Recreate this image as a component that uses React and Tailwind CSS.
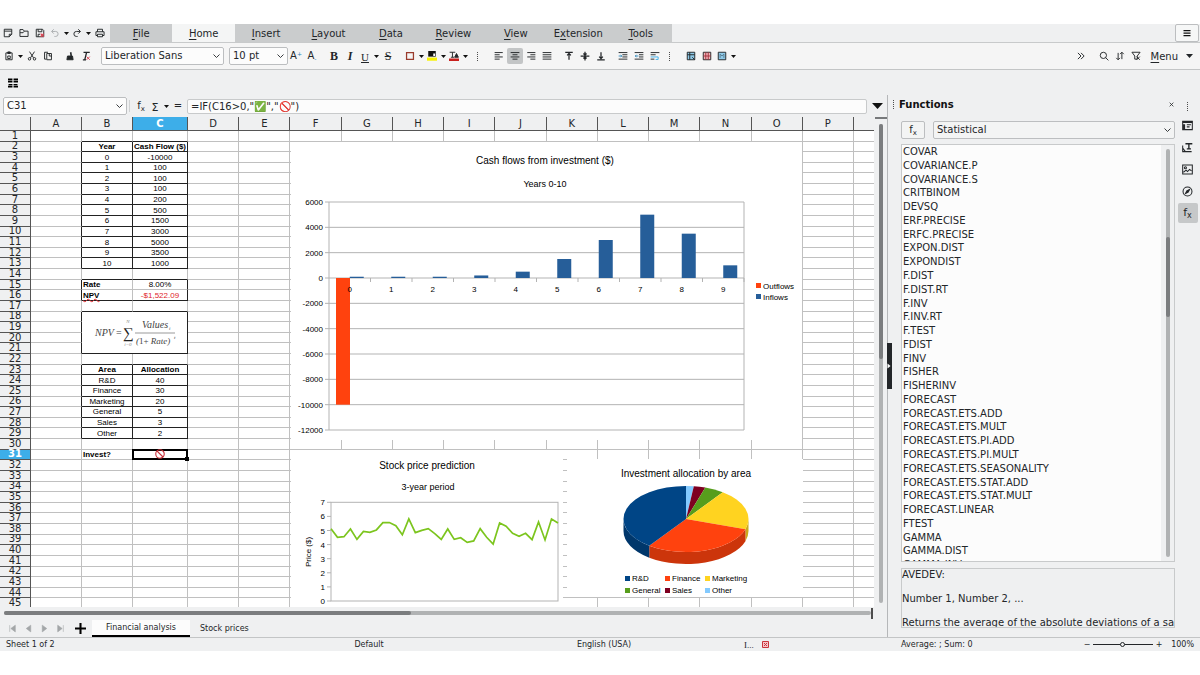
import { useState } from 'react'
import clsx from 'clsx'

const MENU = [
  ['', 'F', 'ile'],
  ['', 'H', 'ome'],
  ['', 'I', 'nsert'],
  ['', 'L', 'ayout'],
  ['', 'D', 'ata'],
  ['', 'R', 'eview'],
  ['', 'V', 'iew'],
  ['E', 'x', 'tension'],
  ['', 'T', 'ools'],
]

const COLUMNS = 'ABCDEFGHIJKLMNOP'.split('')
const ROW_COUNT = 45

const CELLS = {
  B2: 'Year', C2: 'Cash Flow ($)',
  B3: '0', C3: '-10000',
  B4: '1', C4: '100',
  B5: '2', C5: '100',
  B6: '3', C6: '100',
  B7: '4', C7: '200',
  B8: '5', C8: '500',
  B9: '6', C9: '1500',
  B10: '7', C10: '3000',
  B11: '8', C11: '5000',
  B12: '9', C12: '3500',
  B13: '10', C13: '1000',
  B15: 'Rate', C15: '8.00%',
  B16: 'NPV', C16: '-$1,522.09',
  B23: 'Area', C23: 'Allocation',
  B24: 'R&D', C24: '40',
  B25: 'Finance', C25: '30',
  B26: 'Marketing', C26: '20',
  B27: 'General', C27: '5',
  B28: 'Sales', C28: '3',
  B29: 'Other', C29: '2',
  B31: 'Invest?',
}
const BOLD = ['B2', 'C2', 'B15', 'B16', 'B23', 'C23', 'B31']
const LEFT = ['B15', 'B16', 'B31']

const FUNCTIONS = [
  'COVAR', 'COVARIANCE.P', 'COVARIANCE.S', 'CRITBINOM', 'DEVSQ', 'ERF.PRECISE', 'ERFC.PRECISE',
  'EXPON.DIST', 'EXPONDIST', 'F.DIST', 'F.DIST.RT', 'F.INV', 'F.INV.RT', 'F.TEST', 'FDIST', 'FINV',
  'FISHER', 'FISHERINV', 'FORECAST', 'FORECAST.ETS.ADD', 'FORECAST.ETS.MULT', 'FORECAST.ETS.PI.ADD',
  'FORECAST.ETS.PI.MULT', 'FORECAST.ETS.SEASONALITY', 'FORECAST.ETS.STAT.ADD',
  'FORECAST.ETS.STAT.MULT', 'FORECAST.LINEAR', 'FTEST', 'GAMMA', 'GAMMA.DIST', 'GAMMA.INV',
]

const INFLOWS = [100, 100, 100, 200, 500, 1500, 3000, 5000, 3500, 1000]

const PRICES = [
  5.13, 4.52, 4.56, 5.11, 4.37, 4.94, 4.87, 5.04, 5.56, 5.56, 5.34, 4.7, 5.82, 4.85, 5.01, 5.13, 4.78, 4.37,
  5.11, 4.37, 4.49, 4.16, 4.26, 5.13, 4.52, 4.04, 5.53, 5.3, 4.8, 4.59, 4.8, 4.35, 5.6, 4.33, 5.82, 5.53,
]

// clockwise from twelve o'clock
const SLICES = [
  { name: 'Other', value: 2, color: '#83caff' },
  { name: 'Sales', value: 3, color: '#7e0021' },
  { name: 'General', value: 5, color: '#579d1c' },
  { name: 'Marketing', value: 20, color: '#ffd320' },
  { name: 'Finance', value: 30, color: '#ff420e' },
  { name: 'R&D', value: 40, color: '#004586' },
]

/* ---------- icons ---------- */

function Svg({ children, className = 'size-[10px]' }) {
  return (
    <svg className={className} viewBox="0 0 16 16" fill="none" stroke="currentColor" strokeWidth="1.5">
      {children}
    </svg>
  )
}

function Caret() {
  return (
    <svg className="w-[5px] h-[3px]" viewBox="0 0 10 6" fill="currentColor"><path d="M0 0h10L5 6z" /></svg>
  )
}

const ICONS = {
  new: <><path d="M14 10V2H2v12h8z" /><path d="M2 5h12M10 14v-4h4" /></>,
  open: <path d="M1.500 13.500V2.500h5l2 2.500h6v8.500zM1.500 7.500h5l2-2.500" />,
  save: <><path d="M2 2h10l2 2v10H2zM5 2v4h6V2M5 14v-4h3" /><path d="M9 9l5 5M14 9l-5 5" stroke="#da4453" strokeWidth="2" /></>,
  undo: <path d="M6 2L2.500 5.500 6 9M3 5.500h6a4 4 0 0 1 0 8H7" />,
  redo: <path d="M10 2l3.500 3.500L10 9M13 5.500H7a4 4 0 0 0 0 8h2" />,
  print: <><path d="M4 6V2h8v4M4 12H1.500V6h13v6H12" /><path d="M4 10h8v4H4z" /></>,
  paste: <><path d="M3 3h10v11H3z" /><path d="M6 1.500h4V4H6z" fill="currentColor" /><path d="M6 8h4v4H6z" /></>,
  cut: <><path d="M4 1l6.500 10M12 1L5.500 11" /><circle cx="4" cy="12.500" r="2" /><circle cx="12" cy="12.500" r="2" /></>,
  copy: <path d="M5 13H2.500V2H8M6 4h7.500v10H6zM10 4v4h3.500" />,
  brush: <><path d="M9 2l1 6" strokeWidth="2.500" /><path d="M4 8h8l1 6H3z" fill="currentColor" /></>,
  clear: <><path d="M4 2h10M9 2L6 14M3 14h5" strokeWidth="2" /><path d="M9 9l5 5M14 9l-5 5" stroke="#da4453" /></>,
  border: <path d="M2.500 2.500h11v11h-11z" stroke="#9a3b2c" strokeWidth="2" />,
  fill: <><path d="M2 0h12v9H2z" fill="#111" stroke="none" /><path d="M10 4h3v4h-3z" fill="#fff" stroke="none" /><path d="M0 13h16" stroke="#f8f200" strokeWidth="5" /></>,
  color: <><path d="M1 2h9M5.500 2v8M3 10h5" /><path d="M9 10l3-6 3 6z" fill="currentColor" /><path d="M0 14h16" stroke="#c9211e" strokeWidth="4" /></>,
  left: <path d="M1 2.500h13M1 6h8M1 9.500h13M1 13h8" />,
  center: <path d="M1 2.500h14M4 6h8M1 9.500h14M4 13h8" />,
  right: <path d="M2 2.500h13M7 6h8M2 9.500h13M7 13h8" />,
  justify: <path d="M1 2.500h14M1 6h14M1 9.500h14M1 13h14" />,
  top: <path d="M2 2h12M8 14V4M5 7l3-3 3 3" strokeWidth="2" />,
  middle: <path d="M1 8h14M8 1v14M5.500 4L8 6.500 10.500 4M5.500 12L8 9.500l2.500 2.500" strokeWidth="2" />,
  bottom: <path d="M2 14h12M8 2v10M5 9l3 3 3-3" strokeWidth="2" />,
  indent: <><path d="M1 2.500h14M7 6h8M7 9.500h8M1 13h14" /><path d="M1 8h5M4 6l2 2-2 2" stroke="#3b8dbd" /></>,
  outdent: <><path d="M1 2.500h14M8 6h7M8 9.500h7M1 13h14" /><path d="M7 8H2M4 6L2 8l2 2" stroke="#3b8dbd" /></>,
  wrap: <><path d="M1 2.500h14M1 6h8M1 13h6" /><path d="M1 9.500h12v4h-4" stroke="#3daee9" /></>,
  merge: <><path d="M2 2h12v12H2z" fill="#8ec9e8" /><path d="M2 6h12M6 2v12M10 10l4 4" /></>,
  split: <><path d="M2 2h12v12H2z" fill="#f0b5ba" /><path d="M2 8h12M6 2v12M10 2v12" stroke="#a8323e" /></>,
  cells: <><path d="M2 2h12v12H2z" fill="#8ec9e8" /><path d="M5 11V5l3 3 3-3v6" stroke="#5a7d90" /></>,
  more: <path d="M3 3l5 5-5 5M8 3l5 5-5 5" />,
  search: <><circle cx="7" cy="7" r="5" /><path d="M10.500 10.500L15 15" /></>,
  sort: <path d="M5 3v11M2 11l3 3 3-3M11 13V2M8 5l3-3 3 3" />,
  filter: <path d="M1.500 2h13L10 8v5H6V8zM9 9l5 5M14 9l-5 5" />,
  menu: <path d="M1 3h14M1 8h14M1 13h14" strokeWidth="2.500" />,
  props: <><path d="M1 2h14v12H1z" /><path d="M1 3h14M3 6v7" strokeWidth="3" /><path d="M7 7h6M7 10h4" /></>,
  styles: <><path d="M5 2.500h10M10 2v8M7 10h6" strokeWidth="2" /><path d="M1 5v9h13M1 9l4 5" /></>,
  gallery: <><path d="M1 1.500h14v13H1z" /><circle cx="5" cy="5.500" r="1.500" /><path d="M2 12l4-3 2 2 3-3 3 2" /></>,
  navigator: <><circle cx="8" cy="8" r="6.500" /><path d="M11 5L9 9l-4 2 2-4z" fill="currentColor" /></>,
}

function Tool({ icon, children, className, active }) {
  return (
    <button
      aria-label={icon}
      className={clsx('h-4 shrink-0 flex items-center justify-center', className || 'w-4', active && 'bg-[#c3c5c6] rounded-xs')}
    >
      {icon ? <Svg>{ICONS[icon]}</Svg> : <span className="leading-none">{children}</span>}
    </button>
  )
}

function SplitTool({ icon, children, muted }) {
  return (
    <div className={clsx('flex shrink-0 items-center', muted && 'text-[#a9acae]')}>
      <Tool icon={icon} className="w-[14px]">{children}</Tool>
      <button aria-label="More" className="w-2 h-4 flex items-center justify-center text-[#111]"><Caret /></button>
    </div>
  )
}

function Dots({ className }) {
  return <span className={clsx('shrink-0 h-[9px] border-l border-dotted border-[#4d4d4d]', className)} />
}

function NoEntry({ className = 'size-[10px]' }) {
  return (
    <svg className={className} viewBox="0 0 16 16" fill="none" stroke="#c9343c" strokeWidth="1.800">
      <circle cx="8" cy="8" r="6.800" /><path d="M3.200 3.200l9.600 9.600" />
    </svg>
  )
}

function Select({ label, value, className }) {
  return (
    <div className={clsx('relative shrink-0', className)}>
      <select
        aria-label={label}
        defaultValue={value}
        className="block appearance-none w-full h-[18px] px-[3px] text-[10px] leading-4 rounded-xs border border-[#bcbec0] bg-inherit outline-none"
      >
        <option>{value}</option>
      </select>
      <svg className="absolute right-1 top-[7px] w-[7px] h-1 pointer-events-none" viewBox="0 0 14 8" fill="none" stroke="currentColor" strokeWidth="1.800">
        <path d="M1 1l6 6 6-6" />
      </svg>
    </div>
  )
}

/* ---------- charts ---------- */

function CashFlowChart() {
  const x0 = 38
  const width = 415
  const zero = 136
  const y = (v) => zero - (v * 228) / 18000
  const ticks = [6000, 4000, 2000, 0, -2000, -4000, -6000, -8000, -10000, -12000]
  const step = width / 10
  return (
    <svg width="511" height="298" className="block bg-white" fontSize="8" fill="#000">
      <text x="254" y="22" fontSize="10" textAnchor="middle">Cash flows from investment ($)</text>
      <text x="254" y="45" fontSize="9" textAnchor="middle">Years 0-10</text>
      {ticks.map((t) => (
        <g key={t}>
          <line x1={x0 - 4} x2={x0 + width} y1={y(t)} y2={y(t)} stroke="#b3b3b3" />
          <text x="32" y={y(t) + 3} textAnchor="end">{t}</text>
        </g>
      ))}
      <path d={`M${x0} 60V288M${x0 + width} 60V288`} stroke="#b3b3b3" />
      <rect x={x0 + 7} y={zero} width="14" height={y(-10000) - zero} fill="#ff420e" />
      {INFLOWS.map((v, i) => (
        <g key={i}>
          <rect x={x0 + step * (i + 0.5)} y={y(v)} width="14" height={zero - y(v)} fill="#265e99" />
          <line x1={x0 + step * (i + 1)} x2={x0 + step * (i + 1)} y1={zero} y2={zero + 4} stroke="#b3b3b3" />
          <text x={x0 + step * (i + 0.5)} y="150" textAnchor="middle">{i}</text>
        </g>
      ))}
      <rect x="465" y="141" width="5" height="5" fill="#ff420e" />
      <text x="472" y="147">Outflows</text>
      <rect x="465" y="152" width="5" height="5" fill="#265e99" />
      <text x="472" y="158">Inflows</text>
    </svg>
  )
}

function StockChart() {
  const y = (v) => 151 - v * 14.1
  const points = PRICES.map((p, i) => `${40 + (i * 227) / 35},${y(p)}`).join(' ')
  return (
    <svg width="272" height="158" className="block bg-white" fontSize="8" fill="#000">
      <text x="136" y="19" fontSize="10" textAnchor="middle">Stock price prediction</text>
      <text x="137" y="40" fontSize="9" textAnchor="middle">3-year period</text>
      <text transform="translate(20 102) rotate(-90)" textAnchor="middle">Price ($)</text>
      {[0, 1, 2, 3, 4, 5, 6, 7].map((t) => (
        <g key={t}>
          <line x1="36" x2="40" y1={y(t)} y2={y(t)} stroke="#b3b3b3" />
          <text x="34" y={y(t) + 3} textAnchor="end">{t}</text>
        </g>
      ))}
      <rect x="40" y={y(7)} width="227" height={y(0) - y(7)} fill="none" stroke="#b3b3b3" />
      <polyline points={points} fill="none" stroke="#7cc51e" strokeWidth="1.700" />
    </svg>
  )
}

function PieChart() {
  const cx = 119
  const cy = 60
  const rx = 62.500
  const ry = 33
  const depth = 12
  const at = (pct) => {
    const a = (pct / 100) * Math.PI * 2
    return [cx + rx * Math.sin(a), cy - ry * Math.cos(a)]
  }
  let total = 0
  const wedges = SLICES.map((s) => {
    const from = at(total)
    total += s.value
    const to = at(total)
    return { ...s, d: `M${cx} ${cy}L${from}A${rx} ${ry} 0 0 1 ${to}Z` }
  })
  const side = (from, to) => {
    const a = at(from)
    const b = at(to)
    return `M${a}A${rx} ${ry} 0 0 1 ${b}v${depth}A${rx} ${ry} 0 0 0 ${a[0]} ${a[1] + depth}Z`
  }
  const legend = [
    ['R&D', 58, 117], ['Finance', 98, 117], ['Marketing', 138, 117],
    ['General', 58, 129], ['Sales', 98, 129], ['Other', 138, 129],
  ]
  return (
    <svg width="236" height="138" className="block bg-white" fontSize="8" fill="#000">
      <text x="119" y="18" fontSize="10" textAnchor="middle">Investment allocation by area</text>
      <path d={side(25, 30)} fill="#cca91a" />
      <path d={side(30, 60)} fill="#cc350b" />
      <path d={side(60, 75)} fill="#00376b" />
      {wedges.map((w) => <path key={w.name} d={w.d} fill={w.color} />)}
      {legend.map(([name, x, y]) => (
        <g key={name}>
          <rect x={x} y={y} width="5" height="5" fill={SLICES.find((s) => s.name === name).color} />
          <text x={x + 7} y={y + 5}>{name}</text>
        </g>
      ))}
    </svg>
  )
}

function NpvFormula() {
  return (
    <svg width="104" height="42" className="block" fill="#444" fontFamily="Liberation Serif, serif" fontStyle="italic" fontSize="10">
      <text x="13" y="24">NPV</text>
      <text x="34" y="24" fontStyle="normal">=</text>
      <text x="46" y="11" fontSize="5" fill="#888" textAnchor="middle">N</text>
      <text x="46" y="26" fontSize="15" fontStyle="normal" fill="#222" textAnchor="middle">∑</text>
      <text x="46" y="34" fontSize="5" fill="#888" textAnchor="middle">i=0</text>
      <text x="60" y="16">Values</text>
      <text x="87" y="18" fontSize="5">i</text>
      <path d="M53 21h40" stroke="#999" />
      <text x="54" y="32" fontSize="9">(<tspan fontStyle="normal">1+</tspan> Rate)</text>
      <text x="92" y="27" fontSize="5">t</text>
    </svg>
  )
}

/* ---------- sheet ---------- */

const boxed = (col, row) =>
  (col === 'B' || col === 'C') && ((row >= 2 && row <= 13) || (row >= 23 && row <= 29))

function cellBorder(col, row) {
  const next = COLUMNS[COLUMNS.indexOf(col) + 1]
  const inRange = (c, r) => (c === 'B' || c === 'C') && ((r >= 15 && r <= 16) || (r >= 18 && r <= 21))
  const darkRight = boxed(col, row) || boxed(next, row) || inRange(col, row) !== inRange(next, row)
  const darkBottom = boxed(col, row) || boxed(col, row + 1) || inRange(col, row) !== inRange(col, row + 1)
  return clsx(
    'border-r border-b',
    darkRight ? 'border-r-[#222]' : 'border-r-[#c0c0c0]',
    darkBottom ? 'border-b-[#222]' : 'border-b-[#c0c0c0]',
  )
}

function Cell({ col, row }) {
  const id = col + row
  if (id === 'B18') {
    return (
      <td colSpan={2} rowSpan={4} className="col-span-2 row-span-4 border-r border-b border-[#222]">
        <NpvFormula />
      </td>
    )
  }
  if (id === 'C31') {
    return (
      <td className="relative flex items-center justify-center border-2 border-black -ml-px -mt-px">
        <NoEntry />
        <span className="absolute -right-[3px] -bottom-[3px] size-1 bg-black" />
      </td>
    )
  }
  return (
    <td
      className={clsx(
        'flex items-center whitespace-nowrap text-[8px] leading-[9px]',
        cellBorder(col, row),
        LEFT.includes(id) ? 'justify-start pl-px' : 'justify-center',
        BOLD.includes(id) && 'font-bold',
        id === 'C16' && 'text-[#e0242b]',
        id === 'B16' && 'underline decoration-wavy decoration-[#e0242b] decoration-1 underline-offset-0',
      )}
    >
      {CELLS[id]}
    </td>
  )
}

function Sheet() {
  const rows = Array.from({ length: ROW_COUNT }, (_, i) => i + 1)
  const hidden = (col, row) => (col === 'B' || col === 'C') && row >= 18 && row <= 21 && !(col === 'B' && row === 18)
  return (
    <div className="relative flex-1 min-w-0 h-[490px] overflow-hidden bg-white font-['Liberation_Sans',sans-serif] text-black">
      <table className="grid h-[492px] grid-cols-[31px_51px_51px_55px_repeat(13,minmax(0,1fr))_20px] grid-rows-[14px_repeat(45,minmax(0,1fr))]">
        <thead className="contents">
          <tr className="contents font-['DejaVu_Sans',sans-serif] text-[10px] leading-[14px] text-[#232629]">
            <td className="bg-[#eff0f1] border-r border-b border-[#555]" />
            {COLUMNS.map((c) => (
              <th
                key={c}
                className={clsx(
                  'text-center border-r border-b border-[#555]',
                  c === 'C' ? 'bg-[#3daee9] text-white font-bold' : 'bg-[#eff0f1] font-normal',
                )}
              >
                {c}
              </th>
            ))}
            <td className="bg-[#eff0f1] border-b border-[#555]" />
          </tr>
        </thead>
        <tbody className="contents">
          {rows.map((r) => (
            <tr key={r} className="contents">
              <th
                className={clsx(
                  "flex items-center justify-center border-r border-b border-[#555] font-['DejaVu_Sans',sans-serif] text-[10px] leading-[10px]",
                  r === 31 ? 'bg-[#3daee9] text-white font-bold' : 'bg-[#eff0f1] text-[#232629] font-normal',
                )}
              >
                {r}
              </th>
              {COLUMNS.filter((c) => !hidden(c, r)).map((c) => <Cell key={c} col={c} row={r} />)}
              <td className="border-b border-[#c0c0c0]" />
            </tr>
          ))}
        </tbody>
      </table>

      {/* objects anchored on the sheet */}
      <div className="absolute left-[291px] top-[25px]"><CashFlowChart /></div>
      <div className="absolute left-[291px] top-[333px]"><StockChart /></div>
      <div className="absolute left-[567px] top-[342px]"><PieChart /></div>
    </div>
  )
}

/* ---------- panels ---------- */

function TopBar() {
  return (
    <div className="flex h-[19px] border-b border-[#c8cacb]">
      <div className="flex items-center w-[110px] shrink-0">
        <Tool icon="new" />
        <Tool icon="open" />
        <Tool icon="save" />
        <SplitTool icon="undo" muted />
        <SplitTool icon="redo" />
        <Tool icon="print" />
      </div>
      <nav className="flex w-[562px] shrink-0 bg-[#cacccd]">
        {MENU.map(([pre, key, post]) => (
          <button key={key} className={clsx('flex-1 pt-[2px] text-[10px] leading-4', key === 'H' && 'bg-[#f4f5f5]')}>
            {pre}<span className="underline underline-offset-2">{key}</span>{post}
          </button>
        ))}
      </nav>
      <button aria-label="Menu" className="ml-auto mr-px w-6 h-[18px] flex items-center justify-center rounded-xs border border-[#bcbec0] bg-[#f6f7f7] text-[#111]">
        <Svg className="size-2">{ICONS.menu}</Svg>
      </button>
    </div>
  )
}

function Toolbar() {
  return (
    <div className="flex items-center h-[27px] pl-[2px] pr-[7px] bg-[#f5f5f5] border-b border-[#c3c5c6]">
      <SplitTool icon="paste" />
      <Tool icon="cut" />
      <Tool icon="copy" />
      <Tool icon="brush" className="w-4 ml-1.5" />
      <Tool icon="clear" />
      <Select label="Font name" value="Liberation Sans" className="w-[123px] ml-[7px] bg-[#fcfcfc]" />
      <Select label="Font size" value="10 pt" className="w-[59px] ml-[5px] bg-[#fcfcfc]" />
      <Tool className="w-4 text-[10px]">A<sup className="text-[6px] text-[#2a83b5]">+</sup></Tool>
      <Tool className="w-4 text-[10px]">A<sub className="text-[6px] text-[#2a83b5]">-</sub></Tool>
      <Tool className="w-4 ml-1.5 font-['Liberation_Serif',serif] font-bold text-[12px]">B</Tool>
      <Tool className="w-4 font-['Liberation_Serif',serif] font-bold italic text-[12px]">I</Tool>
      <SplitTool><span className="font-['Liberation_Serif',serif] text-[11px] underline">U</span></SplitTool>
      <Tool className="w-4 font-['Liberation_Serif',serif] text-[12px] line-through">S</Tool>
      <div className="flex ml-[7px]">
        <SplitTool icon="border" />
        <SplitTool icon="fill" />
        <SplitTool icon="color" />
      </div>
      <Dots className="ml-2 mr-[13px]" />
      <Tool icon="left" />
      <Tool icon="center" active />
      <Tool icon="right" />
      <Tool icon="justify" />
      <Tool icon="top" className="w-4 ml-1.5" />
      <Tool icon="middle" />
      <Tool icon="bottom" />
      <Tool icon="indent" className="w-4 ml-1.5" />
      <Tool icon="outdent" />
      <Tool icon="wrap" />
      <Dots className="ml-1.5 mr-[13px]" />
      <Tool icon="merge" />
      <Tool icon="split" />
      <SplitTool icon="cells" />
      <Tool icon="more" className="w-4 ml-auto mr-[7px]" />
      <Tool icon="search" />
      <Tool icon="sort" />
      <Tool icon="filter" />
      <button className="flex items-center gap-2 ml-[7px] text-[10px]">
        <span><span className="underline underline-offset-2">M</span>enu</span>
        <svg className="w-[7px] h-1" viewBox="0 0 14 8" fill="currentColor"><path d="M0 0h14L7 8z" /></svg>
      </button>
    </div>
  )
}

function FormulaBar() {
  const [formula, setFormula] = useState('=IF(C16>0,"✅","🚫")')
  return (
    <div className="flex items-center h-[22px] pl-[3px] pr-1">
      <Select label="Name box" value="C31" className="w-[124px] bg-[#fcfcfc]" />
      <span className="h-3 ml-[2px] mr-1 border-l border-[#d0d2d3]" />
      <Tool className="w-[14px] text-[10px]">f<sub className="text-[7px]">x</sub></Tool>
      <SplitTool><span className="text-[11px]">Σ</span></SplitTool>
      <Tool className="w-4 text-[10px]">=</Tool>
      <input
        aria-label="Formula"
        value={formula}
        onChange={(e) => setFormula(e.target.value)}
        className="flex-1 min-w-0 h-[15px] px-[3px] ml-px mr-1 text-[10px] rounded-xs border border-[#c8cacb] bg-[#fcfcfc] outline-none"
      />
      <button aria-label="Expand formula bar" className="w-3 flex justify-center text-[#111]">
        <svg className="w-[11px] h-1.5" viewBox="0 0 22 12" fill="currentColor"><path d="M0 0h22L11 12z" /></svg>
      </button>
    </div>
  )
}

function SheetTabs() {
  const arrows = ['M3 2v12M13 2L5 8l8 6z', 'M12 2L4 8l8 6z', 'M4 2l8 6-8 6z', 'M13 2v12M3 2l8 6-8 6z']
  return (
    <div className="flex items-center h-[18px] pl-1 text-[8px]">
      {arrows.map((d) => (
        <button key={d} aria-label="Scroll sheets" className="w-4 flex justify-center text-[#a3a6a8]">
          <svg className="size-[9px]" viewBox="0 0 16 16" fill="currentColor" stroke="currentColor"><path d={d} /></svg>
        </button>
      ))}
      <button aria-label="Add sheet" className="w-6 flex justify-center text-black">
        <svg className="size-[11px]" viewBox="0 0 16 16" stroke="currentColor" strokeWidth="3"><path d="M8 0v16M0 8h16" /></svg>
      </button>
      <button className="w-[98px] h-[17px] pt-[2px] leading-3 bg-[#fcfcfc] border-b-2 border-black">Financial analysis</button>
      <button className="px-2.5 pt-px">Stock prices</button>
    </div>
  )
}

function FunctionsPanel() {
  return (
    <section className="relative flex flex-1 min-w-0 flex-col pl-[13px] border-l border-[#b5b7b9]">
      <button aria-label="Hide sidebar" className="absolute -left-px top-[248px] w-[5px] h-[46px] flex items-center bg-[#232629]">
        <svg className="w-1 h-1.5" viewBox="0 0 8 12" fill="#fff"><path d="M1 1l6 5-6 5z" /></svg>
      </button>
      <header className="flex items-center h-[18px] -ml-2">
        <Dots className="mr-[5px]" />
        <h2 className="text-[10px] font-bold text-[#111]">Functions</h2>
        <button aria-label="Close" className="ml-auto w-2 flex justify-center">
          <Svg className="size-[5px]"><path d="M2 2l12 12M14 2L2 14" strokeWidth="2.500" /></Svg>
        </button>
      </header>
      <div className="flex mt-2 gap-2">
        <button aria-label="Insert function" className="w-6 h-[18px] text-[10px] leading-3 rounded-xs border border-[#bcbec0] bg-[#f3f4f4]">
          f<sub className="text-[7px]">x</sub>
        </button>
        <Select label="Category" value="Statistical" className="flex-1 bg-[#f3f4f4]" />
      </div>
      <div className="flex h-[418px] mt-[5px] border border-[#c8cacb] overflow-hidden bg-[#eff0f1]">
        <ul role="listbox" aria-label="Functions" className="flex-1 h-[427px] pl-px grid auto-rows-fr text-[10px] leading-[14px] bg-[#fcfcfc]">
          {FUNCTIONS.map((f) => <li key={f} role="option" aria-selected={false} className="min-h-0">{f}</li>)}
        </ul>
        <div className="w-[13px] py-1 flex justify-center">
          <div className="w-1 h-full rounded-full bg-[#b0b2b3] pt-[88px]">
            <div className="w-1 h-20 rounded-full bg-[#7b7d7f]" />
          </div>
        </div>
      </div>
      <p className="h-[60px] mt-[6px] border border-[#c8cacb] overflow-hidden whitespace-pre text-[10px] leading-3">
        {'AVEDEV:\n\nNumber 1, Number 2, ...\n\nReturns the average of the absolute deviations of a sample'}
      </p>
    </section>
  )
}

function Deck() {
  return (
    <aside className="w-[25px] shrink-0 flex flex-col items-center gap-[2px] pt-1">
      <button aria-label="Sidebar settings" className="h-[14px] flex items-center"><Dots /></button>
      {['props', 'styles', 'gallery', 'navigator'].map((name) => (
        <button key={name} aria-label={name} className="w-5 h-5 flex items-center justify-center">
          <Svg className="size-[11px]">{ICONS[name]}</Svg>
        </button>
      ))}
      <button aria-label="Functions" className="w-5 h-5 rounded-xs bg-[#c6c8c9] text-[11px] leading-4">
        f<sub className="text-[8px]">x</sub>
      </button>
    </aside>
  )
}

function StatusBar() {
  return (
    <footer className="grid grid-cols-[239px_260px_210px_180px_minmax(0,1fr)_auto] items-center h-[14px] border-t border-[#c3c5c6] text-[8px] leading-3">
      <span className="pl-1.5">Sheet 1 of 2</span>
      <span className="text-center">Default</span>
      <span className="text-center">English (USA)</span>
      <span className="flex items-center gap-2 pl-[35px]">
        <span className="font-['Liberation_Serif',serif] text-[9px]">I...</span>
        <svg className="size-[7px]" viewBox="0 0 14 14" fill="#f6c6ca" stroke="#c9343c" strokeWidth="2"><path d="M1 1h12v12H1zM4 4l6 6M10 4l-6 6" /></svg>
      </span>
      <span className="pl-3">Average: ; Sum: 0</span>
      <span className="flex items-center pr-1.5">
        <button aria-label="Zoom out" className="w-3">−</button>
        <input
          type="range"
          aria-label="Zoom"
          defaultValue="49"
          className="appearance-none w-[60px] h-px bg-[#232629] [&::-webkit-slider-thumb]:appearance-none [&::-webkit-slider-thumb]:size-[5px] [&::-webkit-slider-thumb]:rounded-full [&::-webkit-slider-thumb]:border [&::-webkit-slider-thumb]:border-[#232629] [&::-webkit-slider-thumb]:bg-[#eff0f1]"
        />
        <button aria-label="Zoom in" className="w-3">+</button>
        <span className="ml-1.5">100%</span>
      </span>
    </footer>
  )
}

export default function App() {
  return (
    <div className="min-h-screen bg-white py-6 font-['DejaVu_Sans',sans-serif] text-[#232629]">
      <div className="bg-[#eff0f1]">
        <TopBar />
        <Toolbar />
        <div className="flex items-center h-[25px] pl-2">
          <button aria-label="Extension" className="text-black">
            <svg className="size-[10px]" viewBox="0 0 18 18" fill="currentColor">
              <path d="M0 1h8v3H0zM10 1h8v3h-8zM0 5h8v3H0zM10 5h8v3h-8zM1 11h7v2H1zM10 11h7v2h-7zM0 14h8v3H0zM10 14h8v3h-8z" />
            </svg>
          </button>
        </div>

        <div className="flex">
          <main className="flex-1 min-w-0">
            <FormulaBar />
            <div className="flex">
              <Sheet />
              <div className="w-[13px] shrink-0 flex flex-col items-center">
                <span className="w-3 h-[2px] bg-[#77797b]" />
                <div className="w-1 flex-1 mt-[5px] mb-1 rounded-full bg-[#b0b2b3]">
                  <div className="h-[49%] rounded-full bg-[#7b7d7f]" />
                </div>
              </div>
            </div>
            <div className="flex items-center h-3 pl-1 pr-[14px]">
              <div className="flex-1 h-1 rounded-full bg-[#b0b2b3]">
                <div className="w-[47%] h-1 rounded-full bg-[#7b7d7f]" />
              </div>
              <span className="w-[2px] h-[11px] bg-[#4d4d4d]" />
            </div>
            <SheetTabs />
          </main>
          <div className="flex w-[313px] shrink-0">
            <FunctionsPanel />
            <Deck />
          </div>
        </div>

        <StatusBar />
      </div>
    </div>
  )
}
